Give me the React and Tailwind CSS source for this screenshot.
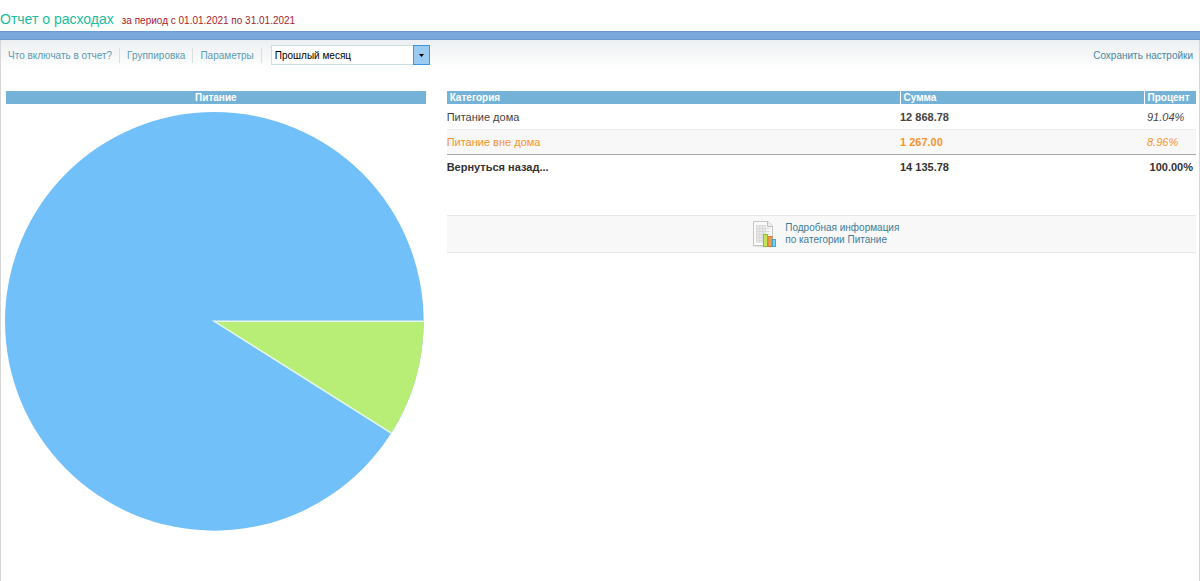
import React, { useState } from 'react';

const MENU = ['Что включать в отчет?', 'Группировка', 'Параметры'];

const PERIODS = ['Прошлый месяц', 'Текущий месяц', 'Текущий год'];

const ROWS = [
  { name: 'Питание дома', sum: '12 868.78', percent: 91.04, color: '#72c0f9' },
  { name: 'Питание вне дома', sum: '1 267.00', percent: 8.96, color: '#b8ee76', active: true },
];

const PieChart = ({ share }) => {
  const cx = 208;
  const cy = 209;
  const r = 209;
  // The small slice starts at three o'clock and runs clockwise
  const angle = (share / 100) * Math.PI * 2;
  const x = cx + r * Math.cos(angle);
  const y = cy + r * Math.sin(angle);

  return (
    <svg viewBox="0 0 419 418" className="block w-full overflow-visible" role="img" aria-label="Питание">
      <circle cx={cx} cy={cy} r={r} fill={ROWS[0].color} />
      <path
        d={`M${cx} ${cy} H${cx + r} A${r} ${r} 0 0 1 ${x} ${y} Z`}
        fill={ROWS[1].color}
      />
      <path d={`M${cx + r} ${cy} H${cx} L${x} ${y}`} fill="none" stroke="#e6f7ec" strokeWidth="1.5" />
    </svg>
  );
};

const ReportIcon = () => (
  <svg width="26" height="28" viewBox="0 0 26 28" className="shrink-0" aria-hidden="true">
    <ellipse cx="13" cy="26" rx="12" ry="1.5" fill="#e2e2e2" />
    <path d="M2.5 1.5 H17 L21.5 6 V25.5 H2.5 Z" fill="#fafafa" stroke="#c6c6c6" />
    <path d="M16.5 1.5 V6.5 H21.5" fill="#ededed" stroke="#bdbdbd" />
    <rect x="5" y="5" width="10" height="18" fill="#e8e8e8" />
    <path
      d="M5 5.5 H15 M5 8.5 H19 M5 11.5 H19 M5 14.5 H19 M5 17.5 H19 M5 20.5 H15 M5.5 5 V23 M8.5 5 V23 M11.5 5 V23 M14.5 5 V23"
      stroke="#dadada"
      fill="none"
    />
    <rect x="12.5" y="14.5" width="4" height="12" fill="#c2e45c" stroke="#8fbf30" />
    <rect x="17" y="16.5" width="4" height="10" fill="#f0a04c" stroke="#cf7a35" />
    <rect x="21.5" y="19.5" width="3" height="7" fill="#7dcdf2" stroke="#45a5d2" />
  </svg>
);

const App = () => {
  const [period, setPeriod] = useState(PERIODS[0]);

  return (
    <div className="flex min-h-screen flex-col bg-white font-['Liberation_Sans',Arial,sans-serif] text-[11px] text-[#444]">
      {/* Title */}
      <header className="flex h-[31px] items-baseline gap-2 pt-[7px]">
        <h1 className="text-[14px] leading-6 text-[#1abc9c]">Отчет о расходах</h1>
        <span className="text-[10px] text-[#a8232b]">за период с 01.01.2021 по 31.01.2021</span>
      </header>
      <div className="h-[9px] border-y border-[#6b9bd1] bg-[#7aa7db]" />

      <main className="flex-1 border-x border-[#d6d6d6]">
        {/* Toolbar */}
        <div className="flex h-[30px] items-center justify-between bg-linear-to-b from-[#eceff1] to-white pr-1.5 pl-[7px] text-[10px]">
          <div className="flex items-center">
            <nav className="flex items-center">
              {MENU.map((item) => (
                <a key={item} href="#" className="mr-[7px] border-r border-[#dcdfe0] pr-[7px] text-[#5e9bb3]">
                  {item}
                </a>
              ))}
            </nav>
            <div className="relative ml-0.5">
              <select
                aria-label="Период"
                value={period}
                onChange={(e) => setPeriod(e.target.value)}
                className="block h-5 w-[159px] appearance-none border border-[#c9e0e0] bg-white px-[3px] text-[10px] text-black"
              >
                {PERIODS.map((p) => (
                  <option key={p}>{p}</option>
                ))}
              </select>
              <span className="pointer-events-none absolute inset-y-0 right-0 flex w-[17px] items-center justify-center border border-[#3d94e0] bg-[#9ccbf2]">
                <svg width="5" height="3" viewBox="0 0 5 3" aria-hidden="true">
                  <path d="M0 0 H5 L2.5 3 Z" fill="#000" />
                </svg>
              </span>
            </div>
          </div>
          <a href="#" className="text-[#4a86a0]">Сохранить настройки</a>
        </div>

        <div className="grid grid-cols-[14fr_25fr] items-start gap-[21px] pt-[21px] pr-[3px] pl-[5px]">
          {/* Chart */}
          <section className="min-w-0 pb-6">
            <h2 className="mb-2 h-[13px] bg-[#74b3d7] text-center text-[10px] leading-[13px] font-bold text-white">
              Питание
            </h2>
            <PieChart share={ROWS[1].percent} />
          </section>

          {/* Table */}
          <section className="min-w-0">
            <table className="w-full table-fixed border-collapse text-left">
              <colgroup>
                <col />
                <col className="w-[244px]" />
                <col className="w-[52px]" />
              </colgroup>
              <thead>
                <tr className="h-[13px] bg-[#74b3d7] text-[10px] leading-[13px] text-white">
                  <th className="py-0 pl-[3px]">Категория</th>
                  <th className="border-l border-white py-0 pl-[3px]">Сумма</th>
                  <th className="border-l border-white py-0 pl-[3px]">Процент</th>
                </tr>
              </thead>
              <tbody>
                {ROWS.map((row) => (
                  <tr
                    key={row.name}
                    className={row.active ? 'h-[25px] bg-[#f8f8f8] text-[#f9932c]' : 'h-[25px] border-b border-[#ececec]'}
                  >
                    <td className="pt-0.5">{row.name}</td>
                    <td className="pt-0.5 font-bold">{row.sum}</td>
                    <td className="pt-0.5 pl-[3px] italic">{row.percent}%</td>
                  </tr>
                ))}
              </tbody>
              <tfoot>
                <tr className="h-[25px] border-t border-[#a8a8a8] font-bold text-[#333]">
                  <td className="p-0">
                    <a href="#">Вернуться назад...</a>
                  </td>
                  <td className="p-0">14 135.78</td>
                  <td className="py-0 pr-[3px] text-right">100.00%</td>
                </tr>
              </tfoot>
            </table>

            <div className="mt-9 flex justify-center border-y border-[#e8e8e8] bg-[#f8f8f8] py-1 pl-2">
              <a href="#" className="flex items-center gap-2 text-[10px] leading-3 text-[#3f7b98]">
                <ReportIcon />
                <span>
                  Подробная информация
                  <br />
                  по категории Питание
                </span>
              </a>
            </div>
          </section>
        </div>
      </main>
    </div>
  );
};

export default App;
